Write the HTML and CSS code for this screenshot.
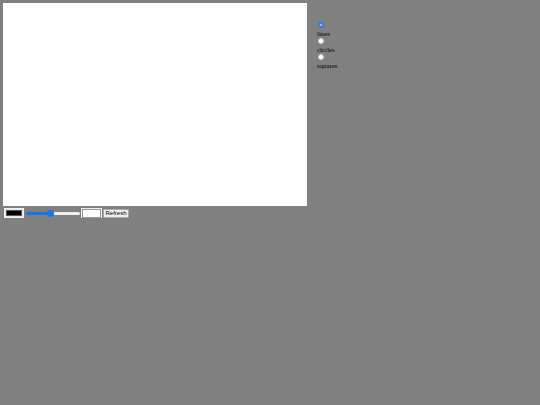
FILE: index.html
```html
<!DOCTYPE html>
<html>
<head>
<meta charset="utf-8">
<link rel="stylesheet" href="styles.css">
</head>
<body>
<div class="top">
  <div class="canvas"></div>
  <div class="shapes">
    <div class="opt"><input type="radio" name="shape" class="radio" checked></div>
    <div class="lbl">lines</div>
    <div class="opt"><input type="radio" name="shape" class="radio"></div>
    <div class="lbl">circles</div>
    <div class="opt"><input type="radio" name="shape" class="radio"></div>
    <div class="lbl">squares</div>
  </div>
</div>
<div class="controls">
  <span class="color"><span class="swatch"></span></span>
  <input type="range" class="slider" min="0" max="100" value="45">
  <input type="text" class="text">
  <button class="btn">Refresh</button>
</div>
</body>
</html>
```
FILE: styles.css
```css
html, body {
  margin: 0;
  padding: 0;
  background: #808080;
}
body {
  font-family: "Liberation Serif", serif;
  font-size: 6.8px;
  color: #000;
}
.top {
  display: flex;
  align-items: flex-start;
  padding: 3px 0 0 3px;
}
.canvas {
  width: 304px;
  height: 203px;
  background: #fff;
}
.shapes {
  margin-left: 10px;
  padding-top: 19px;
}
.opt {
  height: 6px;
  display: flex;
  align-items: center;
  padding-left: 1px;
}
.radio {
  -webkit-appearance: none;
  appearance: none;
  width: 6px;
  height: 6px;
  margin: 0;
  box-sizing: border-box;
  border-radius: 50%;
  border: 1px solid #d0d0d0;
  background: #fff;
}
.radio:checked {
  border: 1.5px solid #1a73e8;
  background: radial-gradient(circle, #8fb8f5 0 1px, #4a8ff0 1.5px);
}
.lbl {
  height: 10px;
  line-height: 8px;
  box-sizing: border-box;
  padding-top: 1.5px;
}
.controls {
  display: flex;
  align-items: center;
  padding: 2px 0 0 4px;
  height: 10px;
}
.color {
  display: inline-block;
  width: 20px;
  height: 10px;
  box-sizing: border-box;
  border: 1px solid #f2f2f2;
  background: #e9e9e9;
  padding: 1px;
}
.swatch {
  display: block;
  width: 100%;
  height: 100%;
  box-sizing: border-box;
  border: 1px solid #555;
  background: #000;
}
.slider {
  -webkit-appearance: none;
  appearance: none;
  width: 54px;
  height: 3px;
  margin: 0 0 0 2px;
  padding: 0;
  border-radius: 2px;
  background: linear-gradient(to right, #1a73e8 0 45%, #efefef 45% 100%);
}
.slider::-webkit-slider-thumb {
  -webkit-appearance: none;
  width: 7px;
  height: 7px;
  border-radius: 50%;
  background: #1a73e8;
  border: none;
}
.text {
  width: 19px;
  height: 9px;
  box-sizing: border-box;
  margin: 0 0 0 2px;
  padding: 0;
  border: 1px solid #999;
  outline: 1px solid #eee;
  background: #fff;
  font-size: 6px;
}
.btn {
  height: 9px;
  width: 26px;
  box-sizing: border-box;
  margin: 1px 0 0 2px;
  padding: 0;
  border: 1px solid #aaa;
  background: #efefef;
  font-family: "Liberation Sans", sans-serif;
  font-size: 6px;
  line-height: 7px;
  color: #000;
  border-radius: 1px;
}
```
